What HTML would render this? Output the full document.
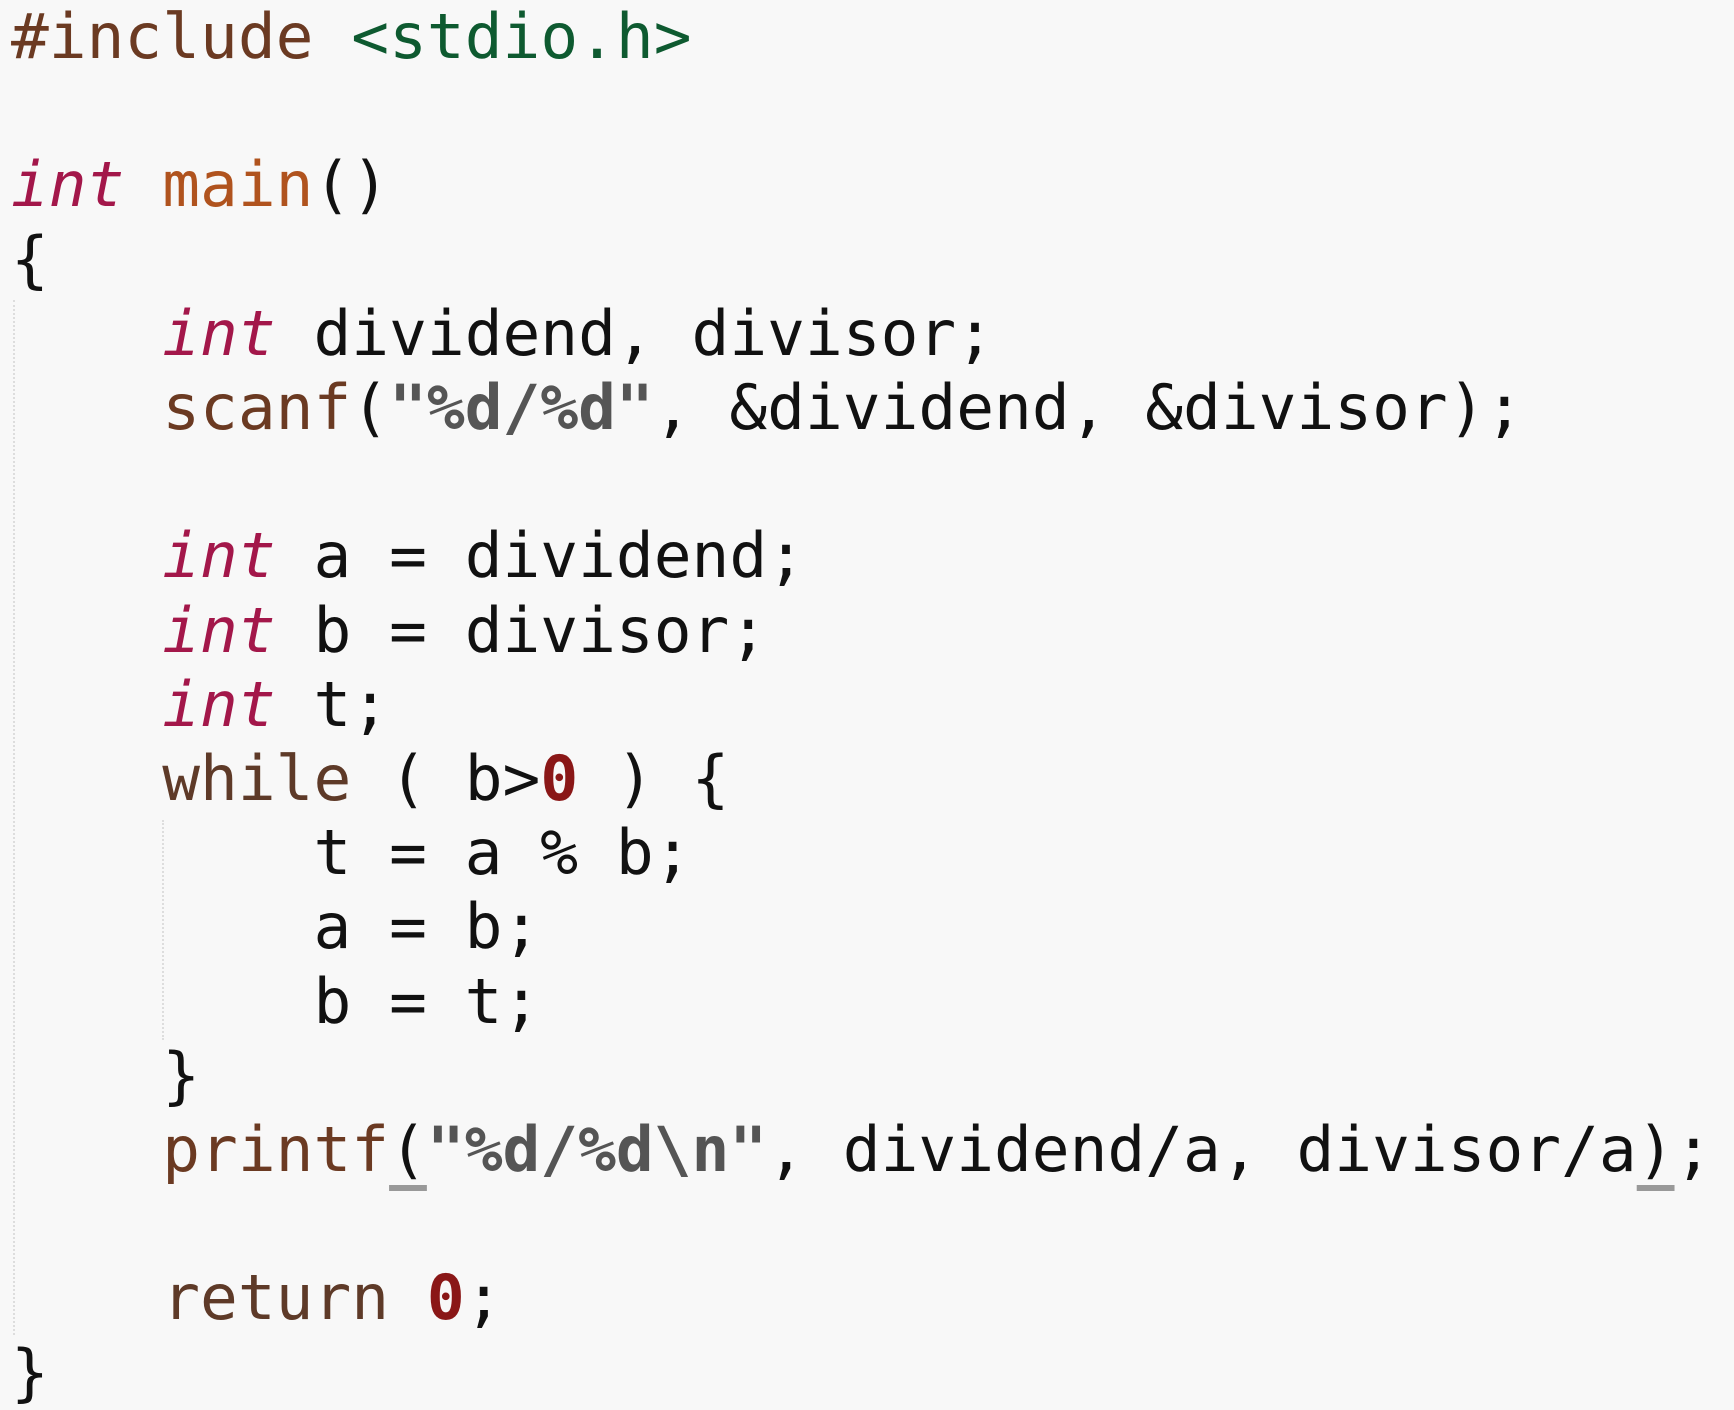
<!DOCTYPE html>
<html><head><meta charset="utf-8"><style>
html,body{margin:0;padding:0;background:#f8f8f8;width:1734px;height:1402px;overflow:hidden}
pre{margin:0;position:absolute;left:11px;top:0;font-family:"DejaVu Sans Mono","Liberation Mono",monospace;font-size:62.8px;line-height:74.2px;color:#111;white-space:pre}
.k{color:#a3174a;font-style:italic}
.f{color:#b0531e}
.p{color:#6b3a22}
.g{color:#0e5a30}
.s{color:#555;font-weight:bold}
.n{color:#8a1717;font-weight:bold}
.w{color:#5e3a28}
.u{text-decoration:underline;text-decoration-color:#999;text-underline-offset:14px}
.guide{position:absolute;border-left:2px dotted #ddd}
</style></head><body>
<div class="guide" style="left:13px;top:300px;height:1035px"></div>
<div class="guide" style="left:162px;top:820px;height:220px"></div>
<pre><span class="p">#include</span> <span class="g">&lt;stdio.h&gt;</span>

<span class="k">int</span> <span class="f">main</span>()
{
    <span class="k">int</span> dividend, divisor;
    <span class="p">scanf</span>(<span class="s">"%d/%d"</span>, &amp;dividend, &amp;divisor);

    <span class="k">int</span> a = dividend;
    <span class="k">int</span> b = divisor;
    <span class="k">int</span> t;
    <span class="w">while</span> ( b&gt;<span class="n">0</span> ) {
        t = a % b;
        a = b;
        b = t;
    }
    <span class="p">printf</span><span class="u">(</span><span class="s">"%d/%d\n"</span>, dividend/a, divisor/a<span class="u">)</span>;

    <span class="w">return</span> <span class="n">0</span>;
}</pre>
</body></html>
